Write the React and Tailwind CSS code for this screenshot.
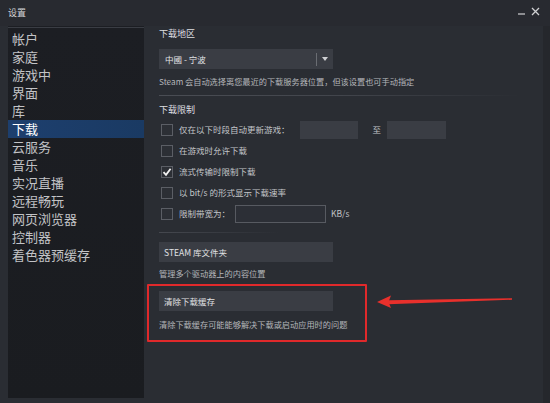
import React from "react";

const navItems = [
  "帐户",
  "家庭",
  "游戏中",
  "界面",
  "库",
  "下载",
  "云服务",
  "音乐",
  "实况直播",
  "远程畅玩",
  "网页浏览器",
  "控制器",
  "着色器预缓存",
];

function CheckBox({ checked }) {
  return (
    <div className="w-[12px] h-[12px] border border-[#5b5e65] bg-[#2c2f35] flex items-center justify-center shrink-0">
      {checked && (
        <svg width="10" height="10" viewBox="0 0 10 10">
          <path d="M1.5 5.2 L4 7.8 L8.6 1.8" fill="none" stroke="#f2f2f2" strokeWidth="1.8" />
        </svg>
      )}
    </div>
  );
}

function Row({ checked, label, children }) {
  return (
    <div className="h-[21px] flex items-center">
      <div className="ml-[2px]">
        <CheckBox checked={checked} />
      </div>
      <span className="ml-[6px] text-[8.5px] text-[#c3c5c9]">{label}</span>
      {children}
    </div>
  );
}

export default function App() {
  return (
    <div className="relative w-[550px] h-[403px] overflow-hidden bg-[#2a2d33] text-[#c8c9cc] font-['Noto_Sans_CJK_SC',sans-serif] flex flex-col">
      {/* title bar */}
      <div className="h-[26px] flex items-center justify-between pl-[8px] pr-[10px] bg-[#282a30] shrink-0">
        <span className="text-[9px] text-[#d4d5d8] -mt-[1px]">设置</span>
        <div className="flex items-center gap-[5px] -mt-[4px]">
          <svg width="8" height="8" viewBox="0 0 8 8">
            <path d="M0 7 H7" stroke="#cfd0d3" strokeWidth="1.2" />
          </svg>
          <svg width="9" height="9" viewBox="0 0 9 9">
            <path d="M1 1 L8 8 M8 1 L1 8" stroke="#cfd0d3" strokeWidth="1.3" />
          </svg>
        </div>
      </div>

      <div className="flex flex-1 min-h-0">
        {/* sidebar */}
        <div className="ml-[8px] w-[136px] mb-[5px] bg-gradient-to-b from-[#1c1e23] to-[#1a1c20] flex flex-col">
          <div className="h-[1px] mt-[1px] bg-[#3a3d44]" />
          <div className="mt-[2px] flex flex-col">
            {navItems.map((item) => (
              <div
                key={item}
                className={
                  item === "下载"
                    ? "h-[18px] flex items-center pl-[4px] text-[13px] text-white bg-gradient-to-r from-[#1d3f6e] to-[#1a3a63]"
                    : "h-[18px] flex items-center pl-[4px] text-[13px] text-[#c2c3c6]"
                }
              >
                {item}
              </div>
            ))}
          </div>
        </div>

        {/* main */}
        <div className="flex-1 pl-[15px] pr-[8px] flex flex-col">
          <div className="text-[9px] text-[#dedfe2] h-[14px] leading-[14px] mt-[1px]">下载地区</div>

          <div className="mt-[8px] w-[174px] h-[20px] bg-[#3a3d44] flex items-center">
            <span className="flex-1 pl-[6px] text-[8.5px] text-[#e1e2e4]">中國 - 宁波</span>
            <div className="w-[1px] h-[13px] bg-[#6a6d73]" />
            <svg className="mx-[5px]" width="6" height="4" viewBox="0 0 6 4">
              <path d="M0 0 H6 L3 4 Z" fill="#cfd0d3" />
            </svg>
          </div>

          <div className="mt-[5px] text-[8.2px] text-[#b4b6ba] h-[14px] leading-[14px]">
            Steam 会自动选择离您最近的下载服务器位置，但该设置也可手动指定
          </div>

          <div className="mt-[7px] h-[1px] w-[362px] bg-gradient-to-r from-[#4a4d54] via-[#42454c] to-[#2a2d33]" />

          <div className="mt-[7px] text-[9px] text-[#dedfe2] h-[14px] leading-[14px]">下载限制</div>

          <div className="mt-[2px] flex flex-col">
            <Row label="仅在以下时段自动更新游戏：">
              <div className="ml-[10px] w-[58px] h-[18px] bg-[#3a3d44]" />
              <span className="ml-[15px] text-[8.5px] text-[#c3c5c9]">至</span>
              <div className="ml-[6px] w-[59px] h-[18px] bg-[#3a3d44]" />
            </Row>
            <Row label="在游戏时允许下载" />
            <Row checked label="流式传输时限制下载" />
            <Row label="以 bit/s 的形式显示下载速率" />
            <Row label="限制带宽为：">
              <div className="ml-[5px] w-[91px] h-[18px] border border-[#575a61] bg-[#2c2f36]" />
              <span className="ml-[5px] text-[8.5px] text-[#c3c5c9]">KB/s</span>
            </Row>
          </div>

          <div className="mt-[8px] h-[1px] w-[120px] bg-gradient-to-r from-[#45484f] to-[#2a2d33]" />

          <div className="mt-[9px] w-[174px] h-[20px] bg-[#3a3d44] flex items-center pl-[5px] text-[8.5px] text-[#e1e2e4]">
            STEAM 库文件夹
          </div>
          <div className="mt-[4px] text-[8.2px] text-[#b4b6ba] h-[14px] leading-[14px]">
            管理多个驱动器上的内容位置
          </div>

          {/* highlighted section */}
          <div className="mt-[4px] -ml-[12px] w-[220px] h-[58px] border-2 border-[#e0292b] rounded-[1px] pl-[10px] pt-[5px]">
            <div className="w-[174px] h-[20px] bg-[#3a3d44] flex items-center pl-[5px] text-[8.5px] text-[#e1e2e4]">
              清除下载缓存
            </div>
            <div className="mt-[6px] text-[8.2px] text-[#b4b6ba] h-[14px] leading-[14px]">
              清除下载缓存可能能够解决下载或启动应用时的问题
            </div>
          </div>
        </div>

        <div className="w-[7px] bg-[#25272c]" />
      </div>

      {/* red arrow annotation */}
      <svg className="absolute left-[376px] top-[292px]" width="140" height="18" viewBox="0 0 140 18">
        <path d="M12 8.2 L136 6.2 L136 7.8 L12 12.2 Z" fill="#e8302c" />
        <path d="M1 10 L15 3.5 L12.5 10 L15 16 Z" fill="#e8302c" />
      </svg>
    </div>
  );
}
